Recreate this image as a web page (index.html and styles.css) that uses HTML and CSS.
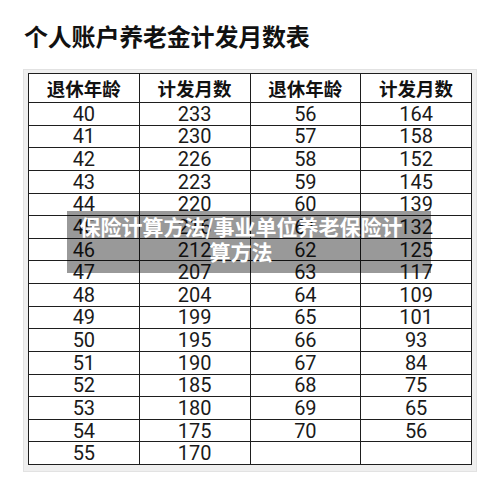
FILE: index.html
```html
<!DOCTYPE html>
<html lang="zh-CN">
<head>
<meta charset="utf-8">
<title>个人账户养老金计发月数表</title>
<link rel="stylesheet" href="styles.css">
</head>
<body>
<div class="page">
  <h1 class="title">个人账户养老金计发月数表</h1>
  <div class="frame">
    <div class="grid">
      <div class="cell head">退休年龄</div><div class="cell head">计发月数</div><div class="cell head">退休年龄</div><div class="cell head">计发月数</div>
      <div class="cell">40</div><div class="cell">233</div><div class="cell">56</div><div class="cell">164</div>
      <div class="cell">41</div><div class="cell">230</div><div class="cell">57</div><div class="cell">158</div>
      <div class="cell">42</div><div class="cell">226</div><div class="cell">58</div><div class="cell">152</div>
      <div class="cell">43</div><div class="cell">223</div><div class="cell">59</div><div class="cell">145</div>
      <div class="cell">44</div><div class="cell">220</div><div class="cell">60</div><div class="cell">139</div>
      <div class="cell">45</div><div class="cell">216</div><div class="cell">61</div><div class="cell">132</div>
      <div class="cell">46</div><div class="cell">212</div><div class="cell">62</div><div class="cell">125</div>
      <div class="cell">47</div><div class="cell">207</div><div class="cell">63</div><div class="cell">117</div>
      <div class="cell">48</div><div class="cell">204</div><div class="cell">64</div><div class="cell">109</div>
      <div class="cell">49</div><div class="cell">199</div><div class="cell">65</div><div class="cell">101</div>
      <div class="cell">50</div><div class="cell">195</div><div class="cell">66</div><div class="cell">93</div>
      <div class="cell">51</div><div class="cell">190</div><div class="cell">67</div><div class="cell">84</div>
      <div class="cell">52</div><div class="cell">185</div><div class="cell">68</div><div class="cell">75</div>
      <div class="cell">53</div><div class="cell">180</div><div class="cell">69</div><div class="cell">65</div>
      <div class="cell">54</div><div class="cell">175</div><div class="cell">70</div><div class="cell">56</div>
      <div class="cell">55</div><div class="cell">170</div><div class="cell"></div><div class="cell"></div>
    </div>
  </div>
  <div class="overlay">保险计算方法/事业单位养老保险计算方法</div>
</div>
</body>
</html>
```
FILE: styles.css
```css
html, body {
  margin: 0;
  padding: 0;
  background: #fff;
}
.page {
  position: relative;
  width: 500px;
  height: 486px;
  overflow: hidden;
  font-family: Roboto, "Noto Sans CJK SC", sans-serif;
  color: #111;
}
.title {
  margin: 24px 0 0 24px;
  font-family: "Noto Sans CJK SC", sans-serif;
  font-size: 24px;
  line-height: 24px;
  font-weight: 700;
  color: #111;
  letter-spacing: -0.2px;
}
.frame {
  margin: 21px 0 0 23px;
  width: 444px;
  padding: 3px 4px 6px 4px;
  background: #efefef;
  border: 1px solid #e2e2e2;
}
.grid {
  display: grid;
  grid-template-columns: repeat(4, 1fr);
  grid-template-rows: 28px repeat(16, 1fr);
  height: 390px;
  gap: 1px;
  background: #1e1e1e;
  border: 1px solid #1e1e1e;
}
.cell {
  background: #fff;
  display: flex;
  align-items: center;
  justify-content: center;
  font-size: 20px;
  line-height: 1;
  color: #1a1a1a;
}
.head {
  font-family: "Noto Sans CJK SC", sans-serif;
  font-size: 18.5px;
  font-weight: 700;
  color: #111;
}
.overlay {
  position: absolute;
  left: 67px;
  top: 211px;
  width: 328px;
  height: 59px;
  padding: 3px 26px 0 10px;
  background: rgba(0, 0, 0, 0.4);
  color: #fff;
  font-family: "Noto Sans CJK SC", sans-serif;
  font-size: 21px;
  line-height: 25px;
  font-weight: 700;
  text-align: center;
}
```
